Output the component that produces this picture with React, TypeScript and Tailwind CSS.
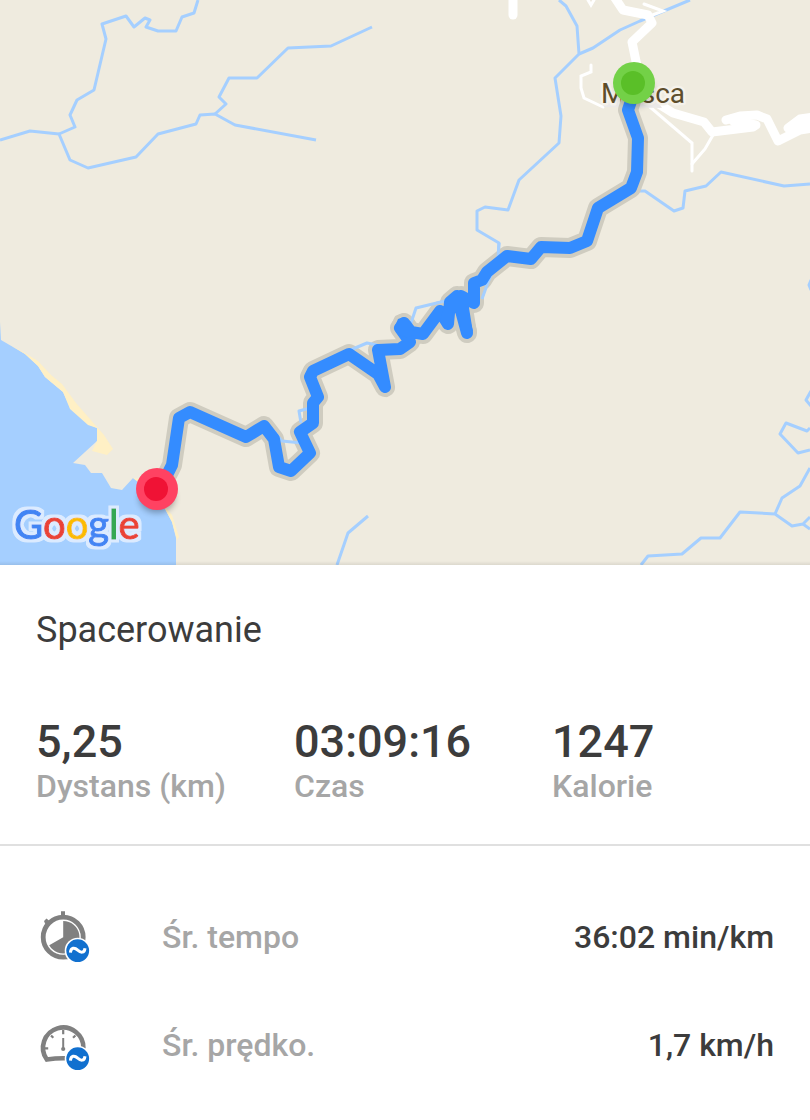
import React from "react";

const rivers = [
  "198,0 194,13 182,17 176,31 158,31 146,27 150,20 145,18 134,27 126,16 102,24 106,39 94,90 77,100 70,115 75,127 59,134",
  "0,140 30,131 59,134 70,160 88,168 136,157 158,134 196,124 200,115 215,114 235,125 316,140",
  "215,114 226,104 219,97 229,78 257,78 288,48 331,46 372,27",
  "559,0 566,6 577,26 579,54 555,78 561,116 559,143 519,180 508,210 485,207 477,211 477,230 499,243 498,258",
  "579,54 593,48 620,30 640,21 690,0",
  "635,191 645,191 674,211 683,208 685,191 706,186 721,172 784,186 810,184",
  "641,565 648,556 682,554 701,538 720,538 740,512 775,514 792,526 803,524 810,517",
  "803,524 810,529",
  "775,514 782,498 800,486 810,468",
  "810,450 798,453 780,434 786,423 807,431 810,428",
  "811,391 806,400 811,406",
  "811,280 809,285 811,290",
  "337,565 348,533 368,516",
];

// streams that run on top of the route's casing
const crossings = [
  "499,243 498,258 487,285 482,299",
  "445,301 416,308 411,323",
  "377,345 367,343 348,351",
  "310,408 299,411 301,423",
  "266,424 270,427 282,441 302,443",
];

const wideRoads = [
  "615,-2 623,10 648,15 652,23 632,42 637,66",
  "650,96 657,103 673,113 704,122 712,132 753,127 756,125 733,121",
  "726,120 740,116 757,115 767,119 778,141 800,130 814,128",
  "788,128 800,119 814,117",
  "794,127 814,122",
  "513,-2 513,15",
];

const thinRoads = [
  "591,65 591,72 581,76 581,88 584,98 603,107",
  "588,0 591,5 594,0",
  "644,4 663,11 650,16",
  "650,107 692,143 692,171",
  "692,164 705,149 713,135",
];

const route =
  "160,486 168,473 172,465 179,418 190,412 246,437 264,426 274,439 279,467 291,471 310,453 300,432 313,423 313,403 318,397 310,377 313,371 349,354 378,374 385,387 378,350 400,349 410,342 400,328 404,323 411,332 423,334 440,311 448,324 450,302 457,296 467,333 461,296 474,303 474,283 482,280 487,272 507,256 531,259 541,247 570,248 587,241 598,208 631,188 637,172 638,138 628,110 632,98";

// filled in where the walker turned back on the same path
const turns =
  "M376 375L380 388L386 393L390 387L386 368ZM395 326L398 319L404 317L411 322L415 334L408 338L400 335ZM440 320L444 327L449 329L453 323L452 312L458 314L462 333L469 338L473 331L466 305L456 291L446 300Z";

const logoLetters = [
  { letter: "G", color: "#4285f4" },
  { letter: "o", color: "#ea4335" },
  { letter: "o", color: "#fbbc05" },
  { letter: "g", color: "#4285f4" },
  { letter: "l", color: "#34a853" },
  { letter: "e", color: "#ea4335" },
];

function RouteMap() {
  return (
    <svg
      viewBox="0 0 810 565"
      className="block w-full h-auto bg-[#efebdf]"
      role="img"
      aria-label="Mapa trasy"
    >
      <defs>
        <linearGradient id="mapEdge" x1="0" y1="0" x2="0" y2="1">
          <stop offset="0" stopColor="#000" stopOpacity="0" />
          <stop offset="1" stopColor="#000" stopOpacity="0.08" />
        </linearGradient>
        <filter id="soft" x="-50%" y="-50%" width="200%" height="200%">
          <feGaussianBlur stdDeviation="3" />
        </filter>
        <filter id="halo" x="-10%" y="-20%" width="120%" height="140%">
          <feMorphology in="SourceAlpha" operator="dilate" radius="3" result="grown" />
          <feGaussianBlur in="grown" stdDeviation="0.6" result="smooth" />
          <feFlood floodColor="#dcebff" />
          <feComposite in2="smooth" operator="in" result="edge" />
          <feMerge>
            <feMergeNode in="edge" />
            <feMergeNode in="SourceGraphic" />
          </feMerge>
        </filter>
      </defs>

      {/* sea and beaches */}
      <path
        fill="#a5cfff"
        d="M0 322L1 340L25 354L38 366L45 377L63 392L71 409L90 425L97 428V441L73 463L85 465L91 473H102L111 488L122 490L133 478L150 489L165 509L172 522L176 538V565H0Z"
      />
      <path
        fill="#fff0c5"
        d="M12 346L25 353L38 361L51 375L62 384L76 403L97 427L104 435L113 449L107 455L92 451L97 441V428L88 425L70 409L63 392L45 377L38 366L25 354ZM133 478L150 480V492ZM163 505L172 515L179 537L177 540L172 522Z"
      />

      <g fill="none" stroke="#a5cfff" strokeWidth="3" strokeLinejoin="round">
        {rivers.map((points) => (
          <polyline key={points} points={points} />
        ))}
      </g>
      <g
        fill="none"
        stroke="#fff"
        strokeWidth="9"
        strokeLinejoin="round"
        strokeLinecap="round"
      >
        {wideRoads.map((points) => (
          <polyline key={points} points={points} />
        ))}
      </g>
      <g fill="none" stroke="#fff" strokeWidth="3" strokeLinecap="round">
        {thinRoads.map((points) => (
          <polyline key={points} points={points} />
        ))}
      </g>

      <path fill="#ebe9e8" d="M599 95L650 88L662 108L604 107Z" />
      <text
        x="601"
        y="103"
        fontSize="28"
        fill="#5d4d2b"
        stroke="#f5f2eb"
        strokeWidth="5"
        strokeLinejoin="round"
        paintOrder="stroke"
        className="font-['Roboto',sans-serif]"
      >
        Masca
      </text>

      <g fill="none" strokeLinejoin="round">
        <path d={turns} stroke="#cfccc0" strokeWidth="8" />
        <polyline points={route} stroke="#cfccc0" strokeWidth="20" />
        <g stroke="#a5cfff" strokeWidth="3">
          {crossings.map((points) => (
            <polyline key={points} points={points} />
          ))}
        </g>
        <polyline points={route} stroke="#348cff" strokeWidth="12" />
        <path d={turns} fill="#348cff" />
      </g>

      <ellipse cx="635" cy="91" rx="19" ry="16" fill="#000" opacity="0.2" filter="url(#soft)" />
      <circle cx="634" cy="83" r="21" fill="#73d147" />
      <circle cx="633" cy="83" r="12" fill="#5abf28" />
      <ellipse cx="157" cy="498" rx="18" ry="15" fill="#000" opacity="0.3" filter="url(#soft)" />
      <circle cx="157" cy="489" r="21" fill="#ff4262" />
      <circle cx="156" cy="489" r="12" fill="#f01235" />

      <text
        x="14"
        y="539"
        fontSize="40"
        strokeWidth="1"
        filter="url(#halo)"
        className="font-['Lato',sans-serif]"
      >
        {logoLetters.map((item, i) => (
          <tspan key={i} fill={item.color} stroke={item.color}>
            {item.letter}
          </tspan>
        ))}
      </text>

      <rect y="561" width="810" height="4" fill="url(#mapEdge)" />
    </svg>
  );
}

function AverageBadge() {
  return (
    <g>
      <circle cx="41.7" cy="40.7" r="13" fill="#fff" />
      <circle cx="41.7" cy="40.7" r="11.4" fill="#1170cf" />
      <path
        d="M34.4 42.6C34.8 37.4 38.6 37.2 41.7 40.2C44.8 43 48.4 43.2 49 38.2"
        fill="none"
        stroke="#fff"
        strokeWidth="3"
      />
    </g>
  );
}

function PaceIcon() {
  return (
    <svg viewBox="0 0 54 54" className="size-[54px] shrink-0" aria-hidden="true">
      <circle cx="27.2" cy="27.2" r="20" fill="none" stroke="#808080" strokeWidth="4.8" />
      <path d="M27.2 27.2V11A16.2 16.2 0 1 1 13.2 35.3Z" fill="#808080" />
      <path d="M25 1.3H29V6H25ZM8 11L10.5 8.5L14.5 12L11 15.5L9 13.5Z" fill="#808080" />
      <AverageBadge />
    </svg>
  );
}

function SpeedIcon() {
  return (
    <svg viewBox="0 0 54 54" className="size-[54px] shrink-0" aria-hidden="true">
      <g fill="none" stroke="#808080">
        <path
          d="M29 40.3C22 40.2 17 40.6 10.8 41.5A20.2 20.2 0 1 1 47.4 30.5"
          strokeWidth="4.6"
        />
        <path
          d="M9 30.4H12.2M27.2 12V16.2M15 17.5L17.3 19.8M39.4 17.5L37 19.8M45 30.4H42"
          strokeWidth="2.2"
        />
        <path d="M27.2 20V31" strokeWidth="2" />
      </g>
      <circle cx="27.2" cy="31" r="2.1" fill="#808080" />
      <AverageBadge />
    </svg>
  );
}

export default function App() {
  const stats = [
    { label: "Dystans (km)", value: "5,25" },
    { label: "Czas", value: "03:09:16" },
    { label: "Kalorie", value: "1247" },
  ];
  const details = [
    { label: "Śr. tempo", value: "36:02 min/km", icon: <PaceIcon /> },
    { label: "Śr. prędko.", value: "1,7 km/h", icon: <SpeedIcon /> },
  ];

  return (
    <main className="min-h-screen bg-white font-['Roboto',sans-serif] text-[#3c3c3c]">
      <RouteMap />

      <section className="pl-9 pt-11 pb-[39px] border-b-2 border-[#e0e0e0]">
        <h1 className="text-[36px] leading-[42px]">Spacerowanie</h1>
        <dl className="grid grid-cols-3 mt-[66px] font-medium">
          {stats.map((item) => (
            <div key={item.label} className="flex flex-col-reverse">
              <dt className="text-[32px] leading-[38px] text-[#a6a6a6]">{item.label}</dt>
              <dd className="text-[45px] leading-[50px]">{item.value}</dd>
            </div>
          ))}
        </dl>
      </section>

      <dl className="pt-[37px] px-9 font-medium text-[32px] leading-[38px]">
        {details.map((item) => (
          <div key={item.label} className="flex items-center h-[108px]">
            {item.icon}
            <dt className="ml-[72px] text-[#a6a6a6]">{item.label}</dt>
            <dd className="ml-auto">{item.value}</dd>
          </div>
        ))}
      </dl>
    </main>
  );
}
